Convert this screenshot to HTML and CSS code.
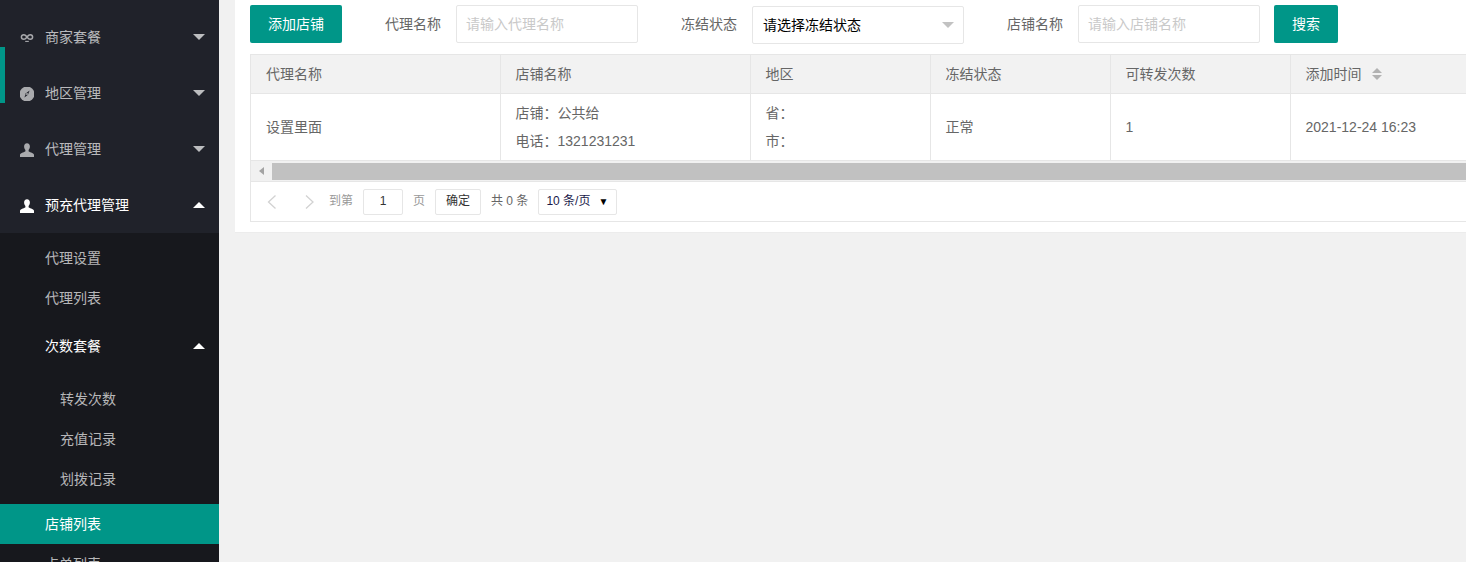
FILE: index.html
```html
<!DOCTYPE html>
<html lang="zh-CN">
<head>
<meta charset="utf-8">
<title>店铺列表</title>
<link rel="stylesheet" href="styles.css">
</head>
<body>
<aside class="side">
  <span class="nav-bar"></span>
  <ul class="nav">
    <li class="item"><svg class="ico" viewBox="0 0 14 14"><path d="M3.900 3.700C2.400 3.700 1.400 4.800 1.400 6s1 2.300 2.500 2.300S6.100 7.100 7 6s1.600-2.300 3.100-2.300 2.500 1.100 2.500 2.300-1 2.300-2.500 2.300S7.900 7.100 7 6 5.400 3.700 3.900 3.700z" fill="none" stroke="currentColor" stroke-width="1.500"/><path d="M5.200 10.400h3.600" stroke="currentColor" stroke-width="1.100"/></svg><span class="txt">商家套餐</span><i class="caret"></i></li>
    <li class="item"><svg class="ico" viewBox="0 0 14 14"><circle cx="7" cy="7" r="7.500" fill="currentColor"/><path d="M9.600 3.400 8 7.800 4.400 10.600 6 6.200z" fill="#20222a"/><circle cx="7" cy="7" r="1" fill="currentColor"/></svg><span class="txt">地区管理</span><i class="caret"></i></li>
    <li class="item"><svg class="ico" viewBox="0 0 14 14"><path d="M7 .2c1.900 0 2.900 1.300 2.900 3.200 0 1.500-.6 2.800-1.300 3.500v1.400c0 .8 5.100 1.300 5.400 3.500V14H0v-2.200c.3-2.200 5.400-2.700 5.400-3.500V6.900C4.700 6.200 4.100 4.900 4.100 3.400 4.100 1.500 5.100.2 7 .2z" fill="currentColor"/></svg><span class="txt">代理管理</span><i class="caret"></i></li>
    <li class="item open"><svg class="ico" viewBox="0 0 14 14"><path d="M7 .2c1.900 0 2.900 1.300 2.900 3.200 0 1.500-.6 2.800-1.300 3.500v1.400c0 .8 5.100 1.300 5.400 3.500V14H0v-2.200c.3-2.200 5.400-2.700 5.400-3.500V6.900C4.700 6.200 4.100 4.900 4.100 3.400 4.100 1.500 5.100.2 7 .2z" fill="currentColor"/></svg><span class="txt">预充代理管理</span><i class="caret up"></i></li>
  </ul>
  <ul class="sub">
    <li class="sub-item">代理设置</li>
    <li class="sub-item">代理列表</li>
    <li class="sub-group"><span class="txt">次数套餐</span><i class="caret up"></i></li>
    <li class="third first">转发次数</li>
    <li class="third">充值记录</li>
    <li class="third last">划拨记录</li>
    <li class="sub-item active">店铺列表</li>
    <li class="sub-item">点单列表</li>
  </ul>
</aside>
<main class="main">
  <section class="card">
    <form class="filters">
      <button type="button" class="btn add">添加店铺</button>
      <label class="lab">代理名称</label>
      <span class="input name">请输入代理名称</span>
      <label class="lab">冻结状态</label>
      <span class="input select">请选择冻结状态<i class="sel-caret"></i></span>
      <label class="lab">店铺名称</label>
      <span class="input name shop">请输入店铺名称</span>
      <button type="button" class="btn search">搜索</button>
    </form>
    <div class="tbox">
      <table class="tbl">
        <colgroup>
          <col class="c1"><col class="c2"><col class="c3"><col class="c4"><col class="c5"><col class="c6">
        </colgroup>
        <thead>
          <tr><th>代理名称</th><th>店铺名称</th><th>地区</th><th>冻结状态</th><th>可转发次数</th><th>添加时间<span class="sort"><i></i><i></i></span></th></tr>
        </thead>
        <tbody>
          <tr>
            <td>设置里面</td>
            <td class="multi"><p>店铺：公共给</p><p>电话：1321231231</p></td>
            <td class="multi"><p>省：</p><p>市：</p></td>
            <td>正常</td>
            <td>1</td>
            <td>2021-12-24 16:23</td>
          </tr>
        </tbody>
      </table>
      <div class="scroll"><span class="sbtn"><i></i></span><span class="thumb"></span></div>
      <div class="pager">
        <svg class="arr" viewBox="0 0 12 16"><path d="M9.500 1.500 2.500 8l7 6.500" fill="none" stroke="#d2d2d2" stroke-width="1.300"/></svg>
        <svg class="arr next" viewBox="0 0 12 16"><path d="M2 1.500 9 8l-7 6.500" fill="none" stroke="#d2d2d2" stroke-width="1.300"/></svg>
        <span class="p-go">到第</span>
        <span class="p-box p-num">1</span>
        <span class="p-page">页</span>
        <span class="p-box p-ok">确定</span>
        <span class="p-total">共 0 条</span>
        <span class="p-box p-size">10 条/页<i>▼</i></span>
      </div>
    </div>
  </section>
</main>
</body>
</html>
```
FILE: styles.css
```css
* { box-sizing: border-box; }
html, body { height: 100%; }
body {
  margin: 0;
  display: flex;
  height: 562px;
  overflow: hidden;
  background: #f1f1f1;
  font: 14px/1.4 "Liberation Sans", "Noto Sans CJK SC", sans-serif;
  color: #666;
}
ul { list-style: none; margin: 0; padding: 0; }
p { margin: 0; }

.side {
  position: relative;
  flex: 0 0 219px;
  height: 562px;
  overflow: hidden;
  background: #20222a;
  padding-top: 9px;
  color: rgba(255, 255, 255, .7);
}
.nav-bar {
  position: absolute;
  left: 0;
  top: 47px;
  width: 5px;
  height: 56px;
  background: #009688;
}
.item {
  display: flex;
  align-items: center;
  height: 56px;
  padding-left: 20px;
  padding-right: 14px;
}
.item.open { color: #fff; }
.ico { width: 14px; height: 14px; margin-right: 11px; flex: none; color: #a9aaad; margin-top: 1px; }
.item.open .ico { color: #fff; }
.txt { flex: 1; padding-top: 2px; }
.caret {
  width: 0;
  height: 0;
  margin-top: -1px;
  border: 6px solid transparent;
  border-bottom-width: 0;
  border-top-color: rgba(255, 255, 255, .7);
}
.caret.up {
  border-top-width: 0;
  border-bottom-width: 6px;
  border-top-color: transparent;
  border-bottom-color: #fff;
}
.sub { background: #17181d; padding-top: 5px; }
.sub-item {
  height: 40px;
  line-height: 40px;
  padding-left: 45px;
}
.sub-item.active { background: #009688; color: #fff; }
.sub-group {
  display: flex;
  align-items: center;
  height: 56px;
  padding: 0 14px 0 45px;
  color: #fff;
}
.third { height: 40px; line-height: 40px; padding-left: 60px; }
.third.first { margin-top: 5px; }
.third.last { margin-bottom: 5px; }

.main { flex: 1; min-width: 0; padding-left: 16px; overflow: hidden; }
.card {
  height: 233px;
  background: #fff;
  padding: 5px 0 11px 15px;
  overflow: hidden;
  border-bottom: 1px solid #ececec;
}
.filters { display: flex; align-items: flex-start; height: 38px; }
.btn {
  height: 38px;
  border: 0;
  border-radius: 2px;
  background: #009688;
  color: #fff;
  font: inherit;
  padding: 2px 0 0;
}
.add { width: 92px; margin-right: 43px; }
.search { width: 64px; margin-left: 14px; }
.lab { width: 56px; line-height: 38px; margin-right: 15px; color: #666; }
.input {
  height: 38px;
  line-height: 36px;
  border: 1px solid #e6e6e6;
  border-radius: 2px;
  padding-left: 9px;
  color: #c9c9c9;
  background: #fff;
}
.name { width: 182px; margin-right: 43px; }
.name.shop { margin-right: 0; }
.select {
  display: flex;
  align-items: center;
  justify-content: space-between;
  width: 212px;
  margin: 1px 43px 0 0;
  color: #000;
  padding-left: 10px;
  padding-right: 9px;
}
.sel-caret {
  width: 0;
  height: 0;
  border: 6px solid transparent;
  border-bottom-width: 0;
  border-top-color: #c2c2c2;
}

.tbox {
  margin: 11px -200px 0 0;
  height: 168px;
  border: 1px solid #e6e6e6;
  overflow: hidden;
}
.tbl {
  width: 1399px;
  table-layout: fixed;
  border-collapse: collapse;
}
.c1 { width: 249px; }
.c2 { width: 250px; }
.c3, .c4, .c5 { width: 180px; }
.c6 { width: 360px; }
th, td {
  padding: 2px 15px 0;
  font-weight: 400;
  text-align: left;
  color: #666;
  border-right: 1px solid #e6e6e6;
  border-bottom: 1px solid #e6e6e6;
}
th { height: 38px; background: #f2f2f2; }
td { height: 67px; }
td.multi { padding-top: 0; }
td p { line-height: 28px; }
.sort {
  display: inline-flex;
  flex-direction: column;
  gap: 2px;
  margin-left: 10px;
  vertical-align: middle;
  position: relative;
  top: -1px;
}
.sort i {
  width: 0;
  height: 0;
  border: 5px solid transparent;
  border-top-width: 0;
  border-bottom-color: #b2b2b2;
}
.sort i + i {
  border-bottom-width: 0;
  border-top-width: 5px;
  border-bottom-color: transparent;
  border-top-color: #b2b2b2;
}
.scroll {
  display: flex;
  height: 21px;
  padding-top: 2px;
  background: #f1f1f1;
  border-bottom: 1px solid #e6e6e6;
}
.sbtn {
  display: flex;
  align-items: center;
  justify-content: center;
  width: 21px;
  height: 17px;
}
.sbtn i {
  width: 0;
  height: 0;
  border: 4px solid transparent;
  border-left-width: 0;
  border-right-width: 5px;
  border-right-color: #a3a3a3;
}
.thumb { flex: 1; height: 17px; background: #c1c1c1; }
.pager {
  display: flex;
  align-items: center;
  height: 40px;
  padding-left: 15px;
  font-size: 12px;
  color: #999;
}
.arr { width: 12px; height: 16px; flex: none; }
.arr.next { margin-left: 26px; }
.p-go { margin-left: 13px; }
.p-box {
  display: flex;
  align-items: center;
  justify-content: center;
  height: 26px;
  border: 1px solid #e6e6e6;
  border-radius: 2px;
  background: #fff;
  color: #333;
}
.p-num { width: 40px; margin-left: 10px; }
.p-page { margin-left: 10px; }
.p-ok { width: 46px; margin-left: 10px; }
.p-total { margin-left: 10px; color: #666; }
.p-size {
  width: 79px;
  margin-left: 10px;
  justify-content: space-between;
  padding: 0 8px 0 7px;
  color: #1a1a4a;
}
.p-size i { font-style: normal; font-size: 10px; color: #000; }
```
